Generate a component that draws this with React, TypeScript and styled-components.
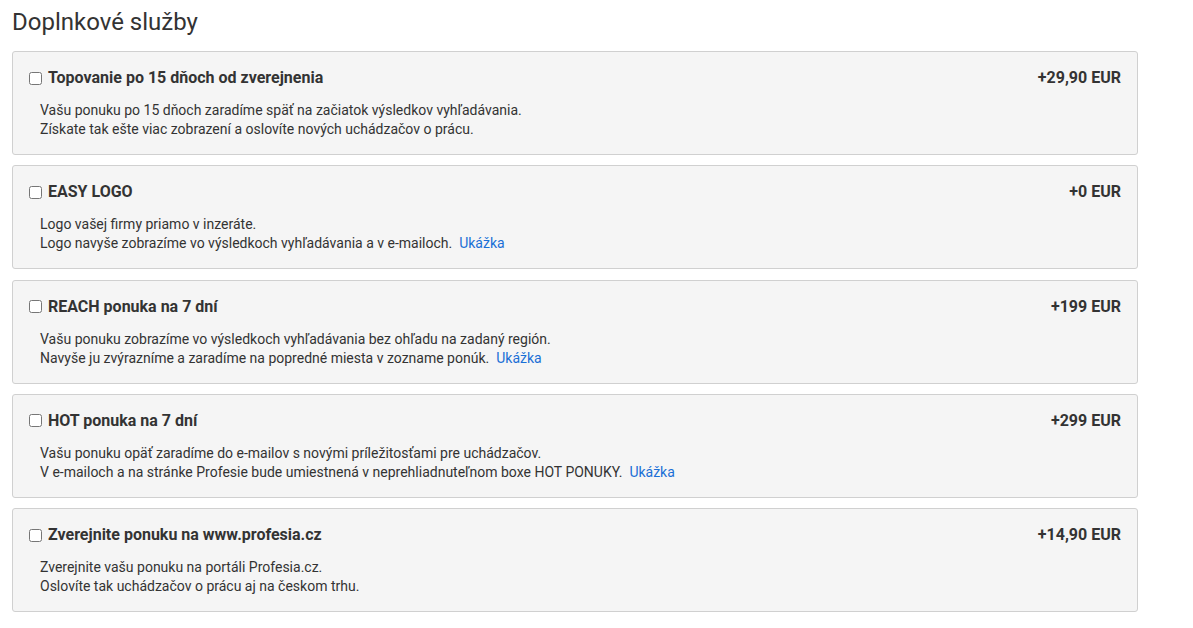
import React from 'react';
import styled, {createGlobalStyle} from "styled-components";

const GlobalStyle = createGlobalStyle`
    body {
        margin: 0;
        background: #fff;
        font-family: Roboto, "Liberation Sans", Arial, sans-serif;
        color: #333;
    }
`

type Service = {
    id: string
    title: string
    price: string
    lines: string[]
    sample?: boolean
}

const services: Service[] = [
    {
        id: "top15",
        title: "Topovanie po 15 dňoch od zverejnenia",
        price: "+29,90 EUR",
        lines: [
            "Vašu ponuku po 15 dňoch zaradíme späť na začiatok výsledkov vyhľadávania.",
            "Získate tak ešte viac zobrazení a oslovíte nových uchádzačov o prácu.",
        ],
    },
    {
        id: "logo",
        title: "EASY LOGO",
        price: "+0 EUR",
        lines: [
            "Logo vašej firmy priamo v inzeráte.",
            "Logo navyše zobrazíme vo výsledkoch vyhľadávania a v e-mailoch.",
        ],
        sample: true,
    },
    {
        id: "reach",
        title: "REACH ponuka na 7 dní",
        price: "+199 EUR",
        lines: [
            "Vašu ponuku zobrazíme vo výsledkoch vyhľadávania bez ohľadu na zadaný región.",
            "Navyše ju zvýrazníme a zaradíme na popredné miesta v zozname ponúk.",
        ],
        sample: true,
    },
    {
        id: "hot",
        title: "HOT ponuka na 7 dní",
        price: "+299 EUR",
        lines: [
            "Vašu ponuku opäť zaradíme do e-mailov s novými príležitosťami pre uchádzačov.",
            "V e-mailoch a na stránke Profesie bude umiestnená v neprehliadnuteľnom boxe HOT PONUKY.",
        ],
        sample: true,
    },
    {
        id: "cz",
        title: "Zverejnite ponuku na www.profesia.cz",
        price: "+14,90 EUR",
        lines: [
            "Zverejnite vašu ponuku na portáli Profesia.cz.",
            "Oslovíte tak uchádzačov o prácu aj na českom trhu.",
        ],
    },
]

function App() {
    return (
        <Page>
            <GlobalStyle/>
            <Heading>Doplnkové služby</Heading>
            <List>
                {services.map(s => (
                    <Card key={s.id}>
                        <CardHead>
                            <Label>
                                <Check type="checkbox"/>
                                <Title>{s.title}</Title>
                            </Label>
                            <Price>{s.price}</Price>
                        </CardHead>
                        <Desc>
                            {s.lines.map((line, i) => (
                                <Line key={i}>
                                    {line}
                                    {s.sample && i === s.lines.length - 1 && <Sample href="#">Ukážka</Sample>}
                                </Line>
                            ))}
                        </Desc>
                    </Card>
                ))}
            </List>
        </Page>
    );
}

const Page = styled.div`
    padding: 6px 12px 12px;
    width: 1126px;
`

const Heading = styled.h2`
    margin: 0 0 13px;
    font-size: 24px;
    line-height: 32px;
    font-weight: 400;
    color: #333;
`

const List = styled.div`
    display: flex;
    flex-direction: column;
    gap: 10.25px;
`

const Card = styled.div`
    background: #f5f5f5;
    border: 1px solid #d0d0d0;
    border-radius: 3px;
    padding: 16px 16px 15px 16px;
`

const CardHead = styled.div`
    display: flex;
    justify-content: space-between;
    align-items: center;
    line-height: 20px;
`

const Label = styled.label`
    display: flex;
    align-items: center;
    gap: 6px;
`

const Check = styled.input`
    width: 13px;
    height: 13px;
    margin: 0;
    accent-color: #333;
`

const Title = styled.span`
    font-size: 16px;
    font-weight: 700;
    color: #333;
`

const Price = styled.span`
    font-size: 16px;
    font-weight: 700;
    color: #333;
`

const Desc = styled.div`
    margin-top: 13px;
    padding-left: 11px;
    font-size: 14px;
    line-height: 19px;
    color: #333;
`

const Line = styled.div``

const Sample = styled.a`
    margin-left: 7px;
    color: #1a6fd6;
    text-decoration: none;
`

export default App;
